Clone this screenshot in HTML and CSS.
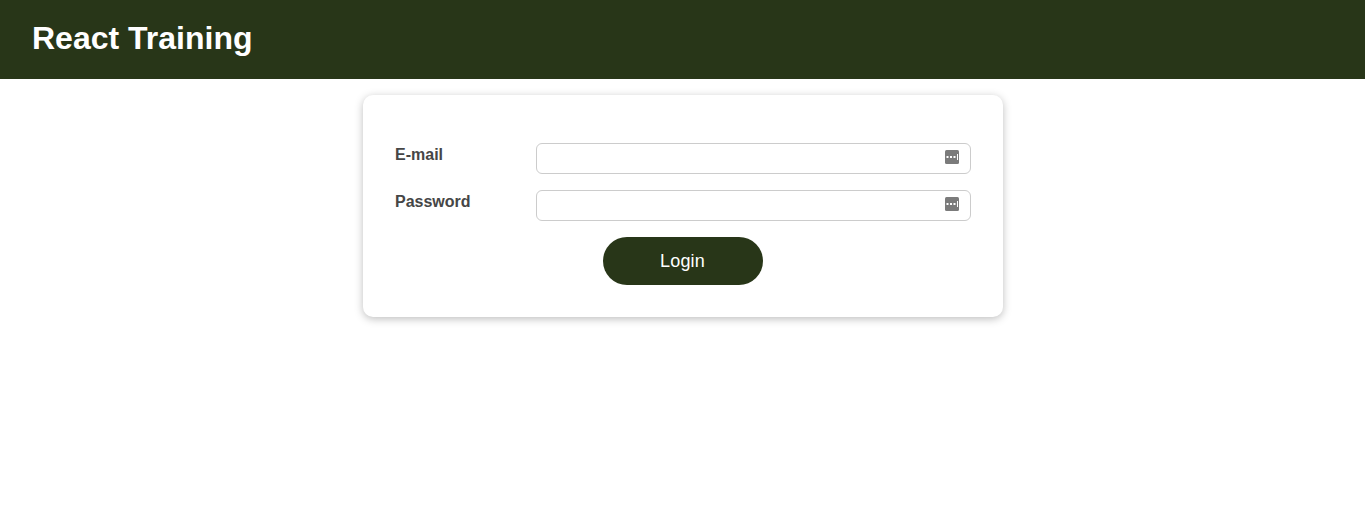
FILE: index.html
```html
<!DOCTYPE html>
<html lang="en">
<head>
<meta charset="utf-8">
<title>React Training</title>
<link rel="stylesheet" href="styles.css">
</head>
<body>
<header class="header"><h1>React Training</h1></header>
<main class="card">
<form>
<div class="control">
<label for="email">E-mail</label>
<div class="field"><input type="email" id="email"><svg class="key" viewBox="0 0 14 14"><rect width="14" height="14" rx="1.5" fill="#7b7b7b"/><path d="M1.5 6h2v2h-2zM5 6h2v2H5zM8.5 6h2v2h-2zM12 4h1v6h-1z" fill="#fff"/></svg></div>
</div>
<div class="control">
<label for="password">Password</label>
<div class="field"><input type="password" id="password"><svg class="key" viewBox="0 0 14 14"><rect width="14" height="14" rx="1.5" fill="#7b7b7b"/><path d="M1.5 6h2v2h-2zM5 6h2v2H5zM8.5 6h2v2h-2zM12 4h1v6h-1z" fill="#fff"/></svg></div>
</div>
<div class="actions"><button type="button">Login</button></div>
</form>
</main>
</body>
</html>
```
FILE: styles.css
```css
* { box-sizing: border-box; }
body { margin: 0; min-height: 100vh; font-family: "Liberation Sans", Arial, sans-serif; background: #fff; }
.header { height: 79px; padding: 0 32px 3px; display: flex; align-items: center; background: #283618; color: #fff; }
.header h1 { margin: 0; font-size: 32px; line-height: 38px; }
.card { width: 640px; margin: 16px auto 0; padding: 32px; border-radius: 10px; background: #fff; box-shadow: 0 2px 8px rgba(0, 0, 0, 0.26); }
.control { display: flex; margin: 16px 0; height: 31px; }
.control label { width: 141px; padding: 3px 0 0 0.5px; font-size: 16px; font-weight: bold; line-height: 18px; color: #464646; }
.field { position: relative; flex: 1; }
.field input { display: block; width: 100%; height: 31px; padding: 5px 6px; font: inherit; border: 1px solid #ccc; border-radius: 6px; outline: none; }
.key { position: absolute; right: 12px; top: 7px; width: 14px; height: 14px; }
.actions { display: flex; justify-content: center; }
.actions button { width: 160px; height: 48px; padding: 0; border: 0; border-radius: 24px; background: #283618; color: #fff; font: 18px "Liberation Sans", Arial, sans-serif; letter-spacing: 0.2px; }
```
